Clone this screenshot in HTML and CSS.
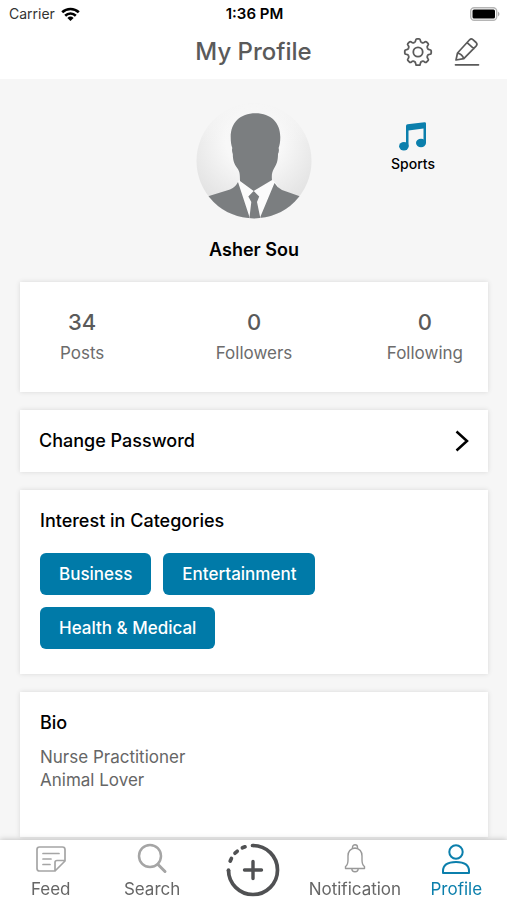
FILE: index.html
```html
<!DOCTYPE html>
<html lang="en">
<head>
<meta charset="utf-8">
<meta name="viewport" content="width=device-width, initial-scale=1">
<title>My Profile</title>
<link rel="stylesheet" href="styles.css">
</head>
<body>
<div class="status">
  <span class="carrier">Carrier
    <svg width="19" height="15" viewBox="0 0 19 15" fill="none" stroke="#000" stroke-width="2.6"><path d="M1.2 5.3a12 12 0 0 1 16.6 0M4.2 8.7a7.6 7.6 0 0 1 10.6 0"/><path d="M9.5 14 6.4 10.9a4.5 4.5 0 0 1 6.2 0z" fill="#000" stroke="none"/></svg>
  </span>
  <span class="time">1:36 PM</span>
  <svg class="battery" width="30" height="14" viewBox="0 0 30 14"><rect x=".7" y=".7" width="26" height="12.6" rx="3.5" fill="#fff" stroke="#b5b5b5" stroke-width="1.4"/><rect x="2.5" y="2.5" width="22.5" height="9" rx="1.5"/><path d="M28 4.5q3 2.5 0 5z" fill="#aaa"/></svg>
</div>
<header class="header">
  <h1>My Profile</h1>
  <div class="actions">
    <button type="button" aria-label="Settings">
      <svg width="30" height="30" viewBox="-15 -15 30 30" fill="none" stroke="#5a5a5a" stroke-width="1.8" stroke-linejoin="round">
        <defs><path id="tooth" d="M-3.9-9.4Q-2.5-10-2.4-11.3-2.2-13.2-1.2-13.2H1.2Q2.2-13.2 2.4-11.3 2.5-10 3.9-9.4"/></defs>
        <use href="#tooth"/><use href="#tooth" transform="rotate(45)"/><use href="#tooth" transform="rotate(90)"/><use href="#tooth" transform="rotate(135)"/><use href="#tooth" transform="rotate(180)"/><use href="#tooth" transform="rotate(225)"/><use href="#tooth" transform="rotate(270)"/><use href="#tooth" transform="rotate(315)"/>
        <circle r="4.7"/>
      </svg>
    </button>
    <button type="button" aria-label="Edit profile">
      <svg width="26" height="30" viewBox="0 0 26 30" fill="none" stroke="#5a5a5a" stroke-width="1.7" stroke-linejoin="round" stroke-linecap="round"><path d="M2 23 3.5 16 15.6 2.8q1.6-1.6 3.3-.2l3.2 2.9q1.6 1.6.2 3.3L9.8 21.6zM3.5 16q4.5 1 6.3 5.6M13.1 5.6l6.7 6"/><path d="M1.5 27.8h23"/></svg>
    </button>
  </div>
</header>
<main class="main">
  <section class="profile">
    <svg class="avatar" width="116" height="116" viewBox="0 0 116 116" role="img" aria-label="Profile photo">
      <defs>
        <clipPath id="round"><circle cx="58" cy="58" r="57.5"/></clipPath>
        <radialGradient id="backdrop" cx=".5" cy=".32" r=".7"><stop offset=".35" stop-color="#f8f8f8"/><stop offset="1" stop-color="#dedede"/></radialGradient>
        <linearGradient id="fade" x1="0" y1="0" x2="0" y2="1"><stop offset="0" stop-color="#f6f6f6"/><stop offset=".35" stop-color="#f6f6f6" stop-opacity="0"/></linearGradient>
      </defs>
      <g clip-path="url(#round)">
        <path fill="url(#backdrop)" d="M0 0h116v116H0z"/><path fill="url(#fade)" d="M0 0h116v116H0z"/>
        <path fill="#fbfbfb" d="M43 77 57.7 88 77 77l5 6-14 33H52L39 83z"/>
        <g fill="#7b7e80">
          <path d="M59.5 10.3C44 10.3 34.7 20 34.7 34c0 5 .5 8 1.6 11-.6 2-.2 4 .5 6 .1 8 2 10.500 4.700 14.500 2 3 2.500 5 2.500 12.500L57.700 88 76 77c-.5-5 0-8 2-11.500 2.500-4.500 4-7 4-14.500.9-2 1.200-4 .6-6 1.100-3 1.700-6 1.700-11C84.300 20 75 10.300 59.500 10.300z"/>
          <path d="M0 98 13 93 34 86.500Q39 84.500 42 79L53.300 113.500V116H0z"/>
          <path d="M116 98 103 93 86 87Q81 84.500 78.500 80L64.500 113.500V116H116z"/>
          <path d="M57.700 88 52.300 93.500 55.300 99 53.300 116H64.500L61 99 63.200 93.500z"/>
        </g>
      </g>
    </svg>
    <h2>Asher Sou</h2>
    <div class="badge">
      <svg width="28" height="29" viewBox="0 0 28 29" fill="#0b7fac"><path d="M7 4Q7 2.600 8.500 2.300L25.500.3Q27 .2 27 1.600V21H24.500V6.500L9.500 8.500V24H7z"/><ellipse cx="4.900" cy="24.200" rx="4.800" ry="4.200"/><ellipse cx="22" cy="21" rx="5" ry="4.200"/></svg>
      <span>Sports</span>
    </div>
  </section>
  <section class="card stats">
    <div><strong>34</strong><span>Posts</span></div>
    <div><strong>0</strong><span>Followers</span></div>
    <div><strong>0</strong><span>Following</span></div>
  </section>
  <a class="card password" href="#password">Change Password
    <svg width="14" height="22" viewBox="0 0 14 22" fill="none" stroke="#000" stroke-width="2.500"><path d="M1.500 1.500 12 11 1.500 20.500"/></svg>
  </a>
  <section class="card categories">
    <h3>Interest in Categories</h3>
    <div class="tags"><button type="button">Business</button><button type="button">Entertainment</button><button type="button">Health &amp; Medical</button></div>
  </section>
  <section class="card bio">
    <h3>Bio</h3>
    <p>Nurse Practitioner<br>Animal Lover</p>
  </section>
</main>
<nav class="tabs">
  <a href="#feed"><svg width="32" height="32" viewBox="0 0 32 32" fill="none" stroke="#a5a5a5" stroke-width="1.700" stroke-linejoin="round" stroke-linecap="round"><path d="M4.500 4h23q2.500 0 2.500 2.500V18L20 28H4.500Q2 28 2 25.500v-19Q2 4 4.500 4zM30 17.500h-8q-2 0-2 2V28M8 10.500h16M8 16h8M8 21.500h7"/></svg><span>Feed</span></a>
  <a href="#search"><svg width="32" height="32" viewBox="0 0 32 32" fill="none" stroke="#a5a5a5" stroke-linecap="round"><circle cx="14" cy="13" r="11" stroke-width="2.500"/><path stroke-width="3" d="m22 21.500 7 7"/></svg><span>Search</span></a>
  <a class="add" href="#add" aria-label="Add post"><svg width="54" height="54" viewBox="-27 -27 54 54" fill="none" stroke="#505153" stroke-width="3.700"><path d="M0-24.500A24.500 24.500 0 1 1-24.500 0"/><path stroke-linecap="round" d="M0-24.500h-.5M-24.500 0v.5M-8-23.200l-2.600 1M-15.800-18.700l-2.200 1.900M-21.600-11.500l-1.200 2.600"/><path stroke-width="3.400" stroke-linecap="round" d="M-8.500 0h17M0-8.500v17"/></svg></a>
  <a href="#notification"><svg width="32" height="32" viewBox="0 0 32 32" fill="none" stroke="#999" stroke-width="1.400" stroke-linejoin="round"><path d="M6.500 25.500v-2Q9 22 9 17v-4q0-7 7-8 7 1 7 8v4q0 5 2.500 6.500v2zM13.500 5.500V4.200a2.500 2.500 0 0 1 5 0v1.300M12.800 25.500a3.200 3.200 0 0 0 6.400 0"/></svg><span>Notification</span></a>
  <a class="current" href="#profile" aria-current="page"><svg width="32" height="32" viewBox="0 0 32 32" fill="none" stroke="#0b7fac" stroke-width="2" stroke-linejoin="round"><circle cx="16" cy="9" r="6.700"/><path d="M3 30v-2q0-9 13-9t13 9v2z"/></svg><span>Profile</span></a>
</nav>
</body>
</html>
```

FILE: styles.css
```css
* { box-sizing: border-box; }
body {
  display: flex;
  flex-direction: column;
  min-height: 100vh;
  margin: 0;
  background: #f6f6f6;
  color: #000;
  font-family: Inter, "Liberation Sans", sans-serif;
  font-size: 17px;
  line-height: 24px;
}
h1, h2, h3, p { margin: 0; font-weight: 500; }
button { padding: 0; border: 0; background: none; font: inherit; }
a { color: inherit; text-decoration: none; }
svg { display: block; flex: none; }

.status {
  display: grid;
  grid-template-columns: 1fr auto 1fr;
  align-items: center;
  height: 28px;
  padding: 0 7px 0 9px;
  background: #fff;
}
.carrier { display: flex; align-items: center; gap: 6px; color: #333; font-size: 14px; }
.time { font-size: 15px; font-weight: 600; }
.battery { justify-self: end; }

.header {
  display: grid;
  grid-template-columns: 1fr auto 1fr;
  align-items: center;
  height: 51px;
  padding: 0 27px 4px;
  background: #fff;
}
.header h1 { grid-column: 2; color: #5a5a5a; font-size: 24px; line-height: 32px; }
.actions { display: flex; justify-content: flex-end; gap: 21px; }

.main { flex: 1; display: flex; flex-direction: column; gap: 18px; padding: 24px 19px 3px 20px; }
.profile { position: relative; display: flex; flex-direction: column; align-items: center; gap: 19px; height: 161px; }
.profile h2 { font-size: 18px; font-weight: 600; }
.badge {
  position: absolute;
  top: 19px;
  right: 53px;
  display: flex;
  flex-direction: column;
  align-items: center;
  gap: 1px;
  font-size: 14px;
  font-weight: 500;
}

.card { background: #fff; box-shadow: 0 0 5px rgba(0, 0, 0, .12); }
.stats { display: grid; grid-template-columns: 1fr auto 1fr; padding: 26px 25px 27px; color: #6c6c6c; }
.stats div { display: flex; flex-direction: column; align-items: center; gap: 5px; }
.stats div:first-child { justify-self: start; padding-left: 15px; }
.stats div:last-child { justify-self: end; }
.stats strong { color: #5a5a5a; font-size: 22px; font-weight: 500; line-height: 28px; }
.password { display: flex; align-items: center; justify-content: space-between; padding: 19px; font-size: 18px; font-weight: 500; }
.categories, .bio { padding: 19px 20px 25px; }
.card h3 { font-size: 18px; }
.tags { display: flex; flex-wrap: wrap; gap: 12px; max-width: 300px; padding-top: 20px; }
.tags button { height: 42px; padding: 0 19px; border-radius: 6px; background: #007aa8; color: #fff; font-weight: 500; }
.bio { flex: 1; color: #666; }
.bio h3 { color: #000; }
.bio p { padding-top: 11px; font-weight: 400; line-height: 23px; }

.tabs {
  position: sticky;
  bottom: 0;
  display: grid;
  grid-template-columns: repeat(5, 1fr);
  height: 60px;
  background: #fff;
  box-shadow: 0 0 6px rgba(0, 0, 0, .25);
  color: #666;
}
.tabs a { display: flex; flex-direction: column; align-items: center; gap: 2px; padding-top: 3px; }
.tabs .current { color: #0b7fac; }
```
